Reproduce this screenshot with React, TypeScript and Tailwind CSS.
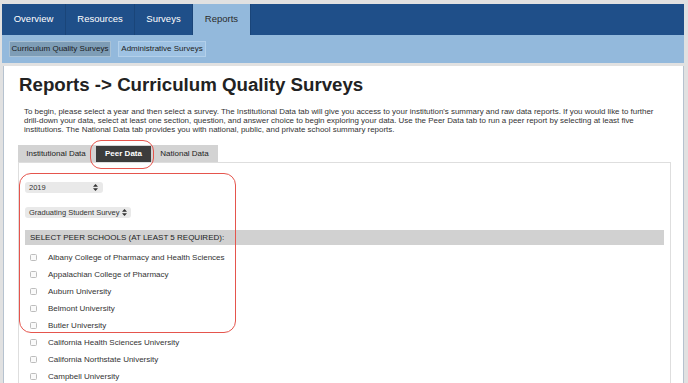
import React from "react"

const navTabs = ["Overview", "Resources", "Surveys", "Reports"]
const navWidths: Record<string, string> = {
  Overview: "w-[64px]",
  Resources: "w-[69px]",
  Surveys: "w-[58px]",
  Reports: "w-[58px]",
}

const schools = [
  "Albany College of Pharmacy and Health Sciences",
  "Appalachian College of Pharmacy",
  "Auburn University",
  "Belmont University",
  "Butler University",
  "California Health Sciences University",
  "California Northstate University",
  "Campbell University",
]

function SelectArrows() {
  return (
    <svg width="5" height="7" viewBox="0 0 5 7" className="shrink-0">
      <path d="M2.5 0 L5 2.8 H0 Z" fill="#333" />
      <path d="M2.5 7 L5 4.2 H0 Z" fill="#333" />
    </svg>
  )
}

export default function App() {
  return (
    <div className="relative w-[688px] h-[383px] overflow-hidden bg-[#e1e1e1] pt-[4px] pl-[2px] pr-[4px] font-['Liberation_Sans',Arial,sans-serif]">
      {/* Main nav */}
      <div className="flex h-[31px] bg-[#1f4f89]">
        {navTabs.map((tab) => (
          <div
            key={tab}
            className={`${navWidths[tab]} flex items-center justify-center text-[9.5px] border-r border-[#1a4579] ${
              tab === "Reports" ? "bg-[#93b9dc] text-[#2b2b2b]" : "text-white"
            }`}
          >
            {tab}
          </div>
        ))}
      </div>

      {/* Sub nav */}
      <div className="flex h-[28px] gap-[7px] bg-[#93b9dc] pl-[7px] pt-[6px]">
        <div className="flex h-[16px] w-[102px] items-center justify-center border border-[#a9c2d6] bg-[#7e9db6] text-[8px] text-[#1a1a1a]">
          Curriculum Quality Surveys
        </div>
        <div className="flex h-[16px] w-[88px] items-center justify-center border border-[#b3d0ea] bg-[#9ec2e3] text-[8px] text-[#222]">
          Administrative Surveys
        </div>
      </div>

      {/* Content panel */}
      <div className="mt-[3px] ml-[1px] h-[400px] border-l border-r border-[#b6c2cf] bg-white pt-[7px] pl-[14px]">
        <h1 className="pl-[1px] text-[18.7px] font-bold leading-[24px] text-[#222]">
          Reports -&gt; Curriculum Quality Surveys
        </h1>

        <div className="mt-[10px] pl-[6px] text-[7.95px] leading-[9px] text-[#333]">
          <p className="whitespace-nowrap">
            To begin, please select a year and then select a survey. The Institutional Data tab will give you access to your institution's summary and raw data reports. If you would like to further
          </p>
          <p className="whitespace-nowrap">
            drill-down your data, select at least one section, question, and answer choice to begin exploring your data. Use the Peer Data tab to run a peer report by selecting at least five
          </p>
          <p className="whitespace-nowrap">
            institutions. The National Data tab provides you with national, public, and private school summary reports.
          </p>
        </div>

        {/* Data tabs */}
        <div className="mt-[11px] flex h-[17px] w-[200px] items-end bg-[#d3d3d3] text-[8px]">
          <div className="flex h-[17px] w-[76px] items-center justify-center text-[#222]">Institutional Data</div>
          <div className="ml-[2px] flex h-[16px] w-[55px] items-center justify-center bg-[#3c3c3c] font-bold text-white">
            Peer Data
          </div>
          <div className="flex h-[17px] flex-1 items-center justify-center text-[#222]">National Data</div>
        </div>

        <div className="mr-[12px] h-[260px] border border-[#dedede] px-[6px] pt-[19px] text-[#333]">
          <div className="flex h-[11px] w-[78px] items-center justify-between rounded-[3px] bg-[#e9e9e9] pl-[4px] pr-[5px] text-[7.5px]">
            <span>2019</span>
            <SelectArrows />
          </div>
          <div className="mt-[14px] flex h-[11px] w-[106px] items-center justify-between rounded-[3px] bg-[#e9e9e9] pl-[4px] pr-[4px] text-[7.5px]">
            <span>Graduating Student Survey</span>
            <SelectArrows />
          </div>

          <div className="mt-[12px] flex h-[15px] items-center bg-[#d1d1d1] pl-[5px] text-[8px] text-[#222]">
            SELECT PEER SCHOOLS (AT LEAST 5 REQUIRED):
          </div>

          <ul className="mt-[4px]">
            {schools.map((school) => (
              <li key={school} className="flex h-[17px] items-center pl-[5px] text-[8px] text-[#333]">
                <span className="h-[7px] w-[7px] rounded-[1.5px] border border-[#bdbdbd] bg-[#fafafa]" />
                <span className="ml-[11px]">{school}</span>
              </li>
            ))}
          </ul>
        </div>
      </div>

      {/* Red annotation marks */}
      <div className="absolute left-[90px] top-[140px] h-[29px] w-[64px] rounded-[11px] border-[1.5px] border-[#e5554d]" />
      <div className="absolute left-[19px] top-[173px] h-[160px] w-[217px] rounded-[12px] border-[1.5px] border-[#e5554d]" />
    </div>
  )
}
